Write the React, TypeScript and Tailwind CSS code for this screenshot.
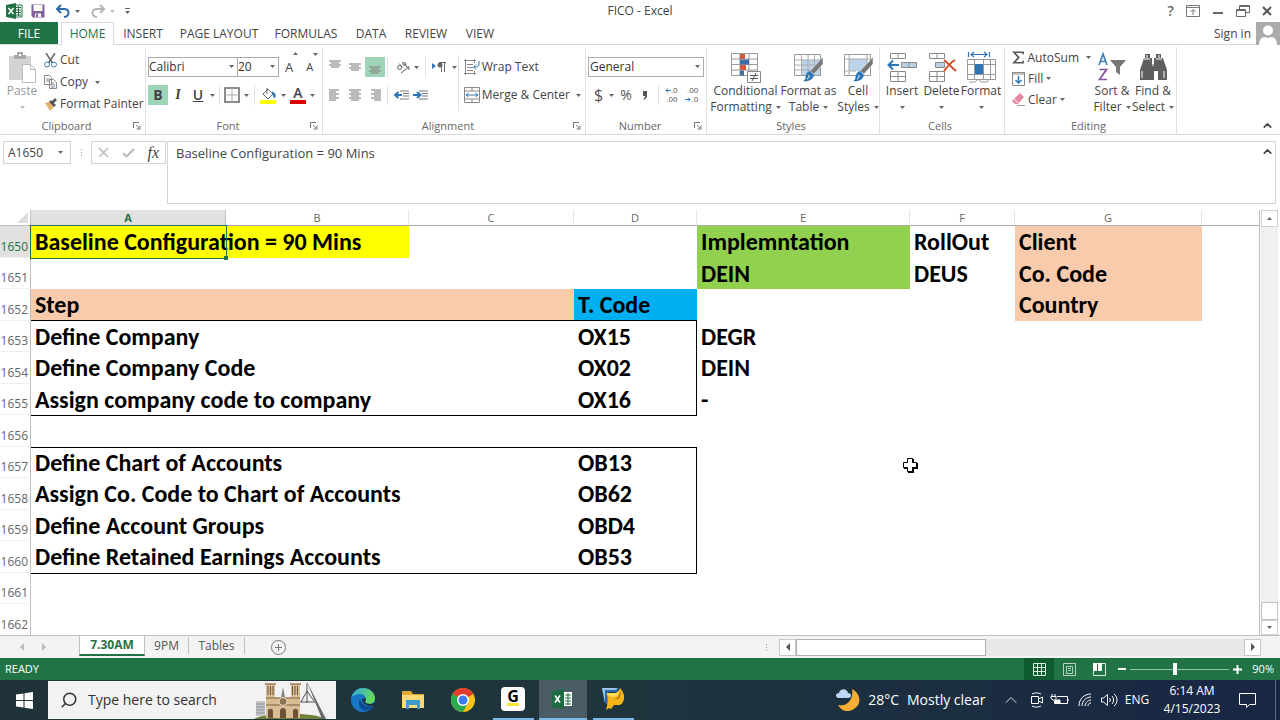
import type { ReactNode } from "react"
import { ChevronUp, Search } from "lucide-react"

type Cell = { text?: string, fill?: string, edge?: string }
type Row = { id: number, cells: Cell[] }

const peach = "bg-[#f8cbad]"
const top = "border-t border-black"
const right = "border-r border-black"
const topRight = "border-t border-r border-black"

const rows: Row[] = [
    { id: 1650, cells: [{ text: "Baseline Configuration = 90 Mins", fill: "bg-[#ffff00]" }, { fill: "bg-[#ffff00]" }, {}, {}, { text: "Implemntation", fill: "bg-[#92d050]" }, { text: "RollOut" }, { text: "Client", fill: peach }] },
    { id: 1651, cells: [{}, {}, {}, {}, { text: "DEIN", fill: "bg-[#92d050]" }, { text: "DEUS" }, { text: "Co. Code", fill: peach }] },
    { id: 1652, cells: [{ text: "Step", fill: peach, edge: "border-b border-black" }, { fill: peach, edge: "border-b border-black" }, { fill: peach, edge: "border-b border-black" }, { text: "T. Code", fill: "bg-[#00b0f0]", edge: "border-b border-black" }, {}, {}, { text: "Country", fill: peach }] },
    { id: 1653, cells: [{ text: "Define Company" }, {}, {}, { text: "OX15", edge: right }, { text: "DEGR" }, {}, {}] },
    { id: 1654, cells: [{ text: "Define Company Code" }, {}, {}, { text: "OX02", edge: right }, { text: "DEIN" }, {}, {}] },
    { id: 1655, cells: [{ text: "Assign company code to company" }, {}, {}, { text: "OX16", edge: right }, { text: "-" }, {}, {}] },
    { id: 1656, cells: [{ edge: top }, { edge: top }, { edge: top }, { edge: top }, {}, {}, {}] },
    { id: 1657, cells: [{ text: "Define Chart of Accounts", edge: top }, { edge: top }, { edge: top }, { text: "OB13", edge: topRight }, {}, {}, {}] },
    { id: 1658, cells: [{ text: "Assign Co. Code to Chart of Accounts" }, {}, {}, { text: "OB62", edge: right }, {}, {}, {}] },
    { id: 1659, cells: [{ text: "Define Account Groups" }, {}, {}, { text: "OBD4", edge: right }, {}, {}, {}] },
    { id: 1660, cells: [{ text: "Define Retained Earnings Accounts" }, {}, {}, { text: "OB53", edge: right }, {}, {}, {}] },
    { id: 1661, cells: [{ edge: top }, { edge: top }, { edge: top }, { edge: top }, {}, {}, {}] },
    { id: 1662, cells: [{}, {}, {}, {}, {}, {}, {}] },
]

const tabs = [
    { name: "INSERT", width: "w-[58px]" },
    { name: "PAGE LAYOUT", width: "w-[94px]" },
    { name: "FORMULAS", width: "w-20" },
    { name: "DATA", width: "w-[50px]" },
    { name: "REVIEW", width: "w-[60px]" },
    { name: "VIEW", width: "w-12" },
]

function Caret({ className = "text-[#666]" }: { className?: string }) {
    return (
        <svg className={`shrink-0 ${className}`} width="5" height="3" viewBox="0 0 5 3" fill="currentColor">
            <path d="M0 0h5L2.5 3z" />
        </svg>
    )
}

function Sep() {
    return <span className="h-5 w-px shrink-0 bg-[#e1e1e1]" />
}

function Launcher() {
    return (
        <svg width="8" height="8" viewBox="0 0 8 8" fill="none" stroke="#777">
            <path d="M.5 6V.5H6M3 3l3.500 3.500M7 3.500V7H3.500" />
        </svg>
    )
}

function Group({ title, width, launcher, children }: { title: string, width: string, launcher?: boolean, children: ReactNode }) {
    return (
        <section className={`flex shrink-0 flex-col border-r border-[#e1e1e1] ${width}`}>
            <div className="flex h-[71px]">{children}</div>
            <div className="flex h-4 items-center pr-1 text-[11px] text-[#666]">
                <span className="grow text-center">{title}</span>
                {launcher && <button aria-label={`${title} settings`}><Launcher /></button>}
            </div>
        </section>
    )
}

function BigButton({ icon, first, second, width }: { icon: ReactNode, first: string, second?: string, width: string }) {
    return (
        <button className={`flex shrink-0 flex-col items-center pt-1 leading-4 ${width}`}>
            <span className="flex h-8 items-center">{icon}</span>
            <span className="whitespace-nowrap">{first}</span>
            <span className="flex h-4 items-center gap-1 whitespace-nowrap">{second}<Caret /></span>
        </button>
    )
}

function Lines({ rows }: { rows: [number, number, number][] }) {
    return (
        <svg width="12" height="12" viewBox="0 0 12 12" stroke="#8c8c8c" strokeWidth="1.200">
            {rows.map(([x1, x2, y]) => <path key={y} d={`M${x1} ${y}H${x2}`} />)}
        </svg>
    )
}

function ExcelIcon() {
    return (
        <svg width="17" height="16" viewBox="0 0 17 16">
            <path d="M9 2h7v12H9z" fill="#fff" stroke="#217346" />
            <path d="M10 4.500h5M10 7h5M10 9.500h5M10 12h5M12.500 3v10" stroke="#217346" />
            <path d="M0 2l10-2v16L0 14z" fill="#217346" />
            <path d="M2.500 5l5 6M7.500 5l-5 6" stroke="#fff" strokeWidth="1.500" />
        </svg>
    )
}

function Brush({ cell }: { cell?: boolean }) {
    return (
        <svg width="31" height="32" viewBox="0 0 31 32" fill="none">
            <path d="M1.500 3.500h26v21h-26z" fill="#fff" stroke="#999" />
            {cell
                ? <><path d="M6 8h18v12H6z" fill="#bcd4ea" /><path d="M1 8h27M6 3v22M24 3v10M1 20h12" stroke="#aaa" /></>
                : <><path d="M9 9h18v15H9z" fill="#bcd4ea" /><path d="M1 9h27M1 14h27M1 19h27M8.500 3v22M15 3v22M21.500 3v22" stroke="#aaa" /></>}
            <path d="M30 6v7l-9 10-4-3z" fill="#777" stroke="#fff" strokeWidth=".5" />
            <path d="M17 20l4 4c-1 5-6 7-11 6 3-1 2-3 3-6 1-3 3-4 4-4z" fill="#2e75b6" />
            <path d="M16 24c0 2 0 3-2 4" stroke="#fff" />
        </svg>
    )
}

function ConditionalIcon() {
    return (
        <svg width="31" height="32" viewBox="0 0 31 32" fill="none">
            <path d="M1.500 2.500h26v22h-26z" fill="#fff" stroke="#999" />
            <path d="M1 8h27M1 13.500h27M1 19h27M10 2v23M19 2v23" stroke="#999" />
            <path d="M10 3h5v5h-5zM10 14h6v5h-6z" fill="#d35b3c" />
            <path d="M10 8.500h9v5h-9zM10 19.500h4v5h-4z" fill="#3c6fa8" />
            <path d="M17.500 20.500h13v11h-13z" fill="#fff" stroke="#888" />
            <path d="M20 24.500h8M20 27.500h8M26 22l-4 8" stroke="#555" />
        </svg>
    )
}

function CellsIcon({ kind }: { kind: "insert" | "delete" }) {
    return (
        <svg width="31" height="32" viewBox="0 0 31 32" fill="#fff" stroke="#8a8a8a">
            <path d="M3.500 2.500h15v5h-15zM11 2.500v5M3.500 20.500h15v10h-15zM11 20.500v10M3.500 25.500h15" />
            {kind === "insert"
                ? <><path d="M14.500 11.500h15v5h-15zM22 11.500v5" fill="#b9cfe3" /><path d="M12 14H2M6 9.500L1.500 14 6 18.500" fill="none" stroke="#2e75b6" strokeWidth="2" /></>
                : <><path d="M9.500 11.500h9v5h-9z" fill="#b9cfe3" /><path d="M18 9c4 3 7 7 12 11M29 9c-5 3-8 7-11 11" fill="none" stroke="#d2492a" strokeWidth="2" /></>}
        </svg>
    )
}

function FormatIcon() {
    return (
        <svg width="31" height="32" viewBox="0 0 31 32" fill="none">
            <path d="M2.500 1v5M23.500 1v5M5 3.500h16M8 1L5 3.500 8 6M18 1l3 2.500L18 6" stroke="#2e75b6" strokeWidth="1.200" />
            <path d="M1.500 8.500h28v20h-28zM1 13.500h28M1 23.500h28M8.500 8v20M17.500 8v20M24.500 8v20M3 31h6l3-3 3 3h6l2-3" stroke="#999" />
            <path d="M9 13h8v10H9z" fill="#2e75b6" />
        </svg>
    )
}

function SortIcon() {
    return (
        <svg width="30" height="30" viewBox="0 0 30 30" fill="none">
            <path d="M2 13L6 2l4 11M3.500 9.500h5" stroke="#3f7fb5" strokeWidth="1.700" />
            <path d="M2.500 17.500h7l-7 10h7.500" stroke="#8654a0" strokeWidth="1.700" />
            <path d="M13 8h16l-6 7v8l-4-3v-5z" fill="#777" />
        </svg>
    )
}

function FindIcon() {
    return (
        <svg width="30" height="30" viewBox="0 0 30 30">
            <path d="M7 2h5v4h2v6h2V6h2V2h5v4h2l4 12v10h-9V19h-4v9H2V18L6 6h1z" fill="#5f5f5f" />
            <path d="M9 3v3M21 3v3M6 7h6M18 7h6M4 19v7M26 19v7M14 13h2" stroke="#fff" />
        </svg>
    )
}

function TitleBar() {
    return (
        <header className="grid h-[22px] shrink-0 grid-cols-3 items-center text-xs text-[#444]">
            <div className="flex items-center pl-1.5">
                <ExcelIcon />
                <button aria-label="Save" className="ml-2">
                    <svg width="14" height="14" viewBox="0 0 14 14">
                        <path d="M.5.500h13v13H2L.5 12z" fill="#80609c" />
                        <path d="M2.500 1h9v6h-9zM4 9.500h6V13H4z" fill="#fff" />
                        <path d="M5 10h2v3H5z" fill="#80609c" />
                    </svg>
                </button>
                <button aria-label="Undo" className="ml-2.5 flex items-center gap-1">
                    <svg width="16" height="14" viewBox="0 0 16 14" fill="none" stroke="#2b6ca8" strokeWidth="2">
                        <path d="M6 1L2 5l4 4M2 5h7c6 0 6 7 0 8" />
                    </svg>
                    <Caret />
                </button>
                <button aria-label="Redo" className="ml-2.5 flex items-center gap-1">
                    <svg width="16" height="14" viewBox="0 0 16 14" fill="none" stroke="#b5b5b5" strokeWidth="2">
                        <path d="M10 1l4 4-4 4M14 5H7c-6 0-6 7 0 8" />
                    </svg>
                    <Caret className="text-[#bbb]" />
                </button>
                <button aria-label="Customize toolbar" className="ml-2.5 flex flex-col gap-0.5">
                    <span className="h-px w-[5px] bg-[#666]" />
                    <Caret />
                </button>
            </div>
            <h1 className="text-center">FICO - Excel</h1>
            <div className="flex items-center justify-end gap-3 pr-2">
                <button className="text-sm leading-4 font-semibold text-[#666]">?</button>
                <button aria-label="Ribbon display options">
                    <svg width="14" height="12" viewBox="0 0 14 12" fill="none" stroke="#777">
                        <path d="M.5.500h13v11H.5zM0 2.500h14M7 10V5M4.500 7L7 4.500 9.500 7" />
                    </svg>
                </button>
                <button aria-label="Minimize">
                    <svg width="12" height="12" viewBox="0 0 12 12"><path d="M1 8h10" stroke="#666" strokeWidth="2" /></svg>
                </button>
                <button aria-label="Restore">
                    <svg width="14" height="12" viewBox="0 0 14 12" fill="none" stroke="#666">
                        <path d="M.5 4.500h9v7h-9zM.5 5.500h9M3.500 4V.500h10v7H10M3.500 1.500h10" />
                    </svg>
                </button>
                <button aria-label="Close">
                    <svg width="10" height="10" viewBox="0 0 10 10"><path d="M1 1l8 8M9 1L1 9" stroke="#555" strokeWidth="2" /></svg>
                </button>
            </div>
        </header>
    )
}

function TabBar() {
    return (
        <nav className="flex h-[23px] shrink-0 border-b border-[#d9d9d9] text-xs text-[#444]">
            <button className="w-[58px] bg-[#217346] pt-px text-white">FILE</button>
            <button className="-mb-px ml-[3px] w-[53px] border border-b-0 border-[#d9d9d9] bg-white text-[#217346]">HOME</button>
            {tabs.map(tab => <button key={tab.name} className={`pt-0.5 whitespace-nowrap ${tab.width}`}>{tab.name}</button>)}
            <a href="#signin" className="mr-[5px] ml-auto self-center pt-0.5">Sign in</a>
            <svg className="h-[23px] w-6" viewBox="0 0 24 23">
                <path d="M0 0h24v23H0z" fill="#ababab" />
                <circle cx="12" cy="8.500" r="5" fill="#fff" />
                <path d="M3 23c0-6 3-8 6-8l3 1 3-1c3 0 6 2 6 8z" fill="#fff" />
            </svg>
        </nav>
    )
}

function FontGroup() {
    return (
        <Group title="Font" width="w-[177px]" launcher>
            <div className="flex flex-col gap-2 pt-2.5 pl-0.5">
                <div className="flex h-5 items-center">
                    <div className="relative">
                        <select aria-label="Font" className="h-5 w-[90px] appearance-none border border-[#ababab] bg-white text-xs text-[#333] outline-none">
                            <option>Calibri</option>
                        </select>
                        <span className="pointer-events-none absolute top-2 right-1"><Caret /></span>
                    </div>
                    <div className="relative">
                        <select aria-label="Font size" className="h-5 w-[41px] appearance-none border border-l-0 border-[#ababab] bg-white text-xs text-[#333] outline-none">
                            <option>20</option>
                        </select>
                        <span className="pointer-events-none absolute top-2 right-1"><Caret /></span>
                    </div>
                    <button className="ml-1.5 flex text-[13px] leading-5">A<sup><Caret className="rotate-180 text-[#666]" /></sup></button>
                    <button className="ml-2 flex text-[11px] leading-5">A<sup><Caret /></sup></button>
                </div>
                <div className="flex h-5 items-center text-sm">
                    <button className="h-5 w-5 bg-[#9fd5b7] leading-5 font-bold">B</button>
                    <button className="w-5 font-serif font-bold italic">I</button>
                    <button className="w-5 font-semibold underline">U</button>
                    <button aria-label="Underline style" className="ml-0.5"><Caret /></button>
                    <span className="mx-1 flex"><Sep /></span>
                    <button aria-label="Borders" className="flex items-center gap-1">
                        <svg width="16" height="16" viewBox="0 0 16 16" fill="none">
                            <path d="M1 1h14v14H1z" stroke="#666" strokeWidth="1.500" />
                            <path d="M8 1v14M1 8h14" stroke="#aaa" />
                        </svg>
                        <Caret />
                    </button>
                    <span className="mx-[5px] flex"><Sep /></span>
                    <button aria-label="Fill color" className="flex items-center gap-1">
                        <svg width="17" height="17" viewBox="0 0 17 17" fill="none">
                            <path d="M3 7l5-5 5 5-5 5z" fill="#fff" stroke="#666" />
                            <path d="M7 7V1" stroke="#666" />
                            <path d="M12 5c3 1 4 3 2.500 6-1-2-1-3-2.500-6z" fill="#2e75b6" stroke="#2e75b6" />
                            <path d="M0 13h16v4H0z" fill="#ffff00" />
                        </svg>
                        <Caret />
                    </button>
                    <button aria-label="Font color" className="ml-1 flex items-center gap-1">
                        <span className="flex w-4 flex-col items-center text-sm leading-3 font-semibold">A<span className="mt-px h-1 w-4 bg-[#d80000]" /></span>
                        <Caret />
                    </button>
                </div>
            </div>
        </Group>
    )
}

function AlignmentGroup() {
    return (
        <Group title="Alignment" width="w-[263px]" launcher>
            <div className="flex flex-col gap-2 pt-2.5 pl-0.5">
                <div className="flex h-5 items-center">
                    <button aria-label="Top align" className="flex h-5 w-5 items-center justify-center pb-1"><Lines rows={[[0, 12, 2], [2, 10, 4], [0, 12, 6], [2, 10, 8]]} /></button>
                    <button aria-label="Middle align" className="flex h-5 w-5 items-center justify-center"><Lines rows={[[0, 12, 3], [2, 10, 5], [0, 12, 7], [2, 10, 9]]} /></button>
                    <button aria-label="Bottom align" className="flex h-5 w-5 items-center justify-center bg-[#9fd5b7] pt-1"><Lines rows={[[0, 12, 4], [2, 10, 6], [0, 12, 8], [2, 10, 10]]} /></button>
                    <span className="mr-2 ml-0.5 flex"><Sep /></span>
                    <button aria-label="Orientation" className="flex items-center gap-1">
                        <svg width="14" height="14" viewBox="0 0 14 14" fill="none" stroke="#666">
                            <circle cx="3.500" cy="7.500" r="2" /><path d="M3 3.500l4 4M6 2l5 4.500" /><circle cx="8.500" cy="4" r="1.500" /><path d="M5 13l8-6M13 10V7h-3" />
                        </svg>
                        <Caret />
                    </button>
                    <span className="mx-1.5 flex"><Sep /></span>
                    <button aria-label="Text direction" className="flex items-center gap-1.5">
                        <svg width="14" height="10" viewBox="0 0 14 10">
                            <path d="M0 1l4 3-4 3z" fill="#2e75b6" />
                            <path d="M9.500 0v10M12.500 0v10M7 .500h7" stroke="#666" />
                            <circle cx="8" cy="3" r="2.500" fill="#666" />
                        </svg>
                        <Caret />
                    </button>
                </div>
                <div className="flex h-5 items-center">
                    <button aria-label="Align left" className="flex w-5 justify-center"><Lines rows={[[0, 10, 1], [0, 7, 3], [0, 10, 5], [0, 7, 7], [0, 10, 9], [0, 7, 11]]} /></button>
                    <button aria-label="Center" className="flex w-5 justify-center"><Lines rows={[[0, 12, 1], [2, 10, 3], [0, 12, 5], [2, 10, 7], [0, 12, 9], [2, 10, 11]]} /></button>
                    <button aria-label="Align right" className="flex w-5 justify-center"><Lines rows={[[2, 12, 1], [5, 12, 3], [2, 12, 5], [5, 12, 7], [2, 12, 9], [5, 12, 11]]} /></button>
                    <span className="mr-1.5 ml-0.5 flex"><Sep /></span>
                    <button aria-label="Decrease indent">
                        <svg width="15" height="10" viewBox="0 0 15 10" fill="none"><path d="M6 1h9M9 3.500h6M9 6h6M6 9h9" stroke="#777" /><path d="M8 5H2M4.500 2L1 5l3.500 3" stroke="#2e75b6" strokeWidth="2" /></svg>
                    </button>
                    <button aria-label="Increase indent" className="ml-1">
                        <svg width="15" height="10" viewBox="0 0 15 10" fill="none"><path d="M6 1h9M9 3.500h6M9 6h6M6 9h9" stroke="#777" /><path d="M0 5h6M4 2l3.500 3L4 8" stroke="#2e75b6" strokeWidth="2" /></svg>
                    </button>
                </div>
            </div>
            <span className="mt-2 ml-auto h-14 w-px bg-[#e1e1e1]" />
            <div className="flex flex-col gap-2 pt-2.5 pr-1 pl-[5px]">
                <button className="flex h-5 items-center gap-0.5">
                    <svg width="16" height="16" viewBox="0 0 16 16" fill="none" stroke="#888">
                        <path d="M1.500 0v16M10.500 0v4M10.500 12v4M0 1.500h12M3 5.500h6M3 8.500h6M3 11.500h6M0 14.500h12" />
                        <path d="M15 2v3c0 3-2 3-5 3M12 5.500L9.500 8l2.500 2.500" stroke="#2e75b6" />
                    </svg>
                    Wrap Text
                </button>
                <button className="flex h-5 items-center gap-0.5 whitespace-nowrap">
                    <svg width="16" height="16" viewBox="0 0 16 16" fill="none" stroke="#888">
                        <path d="M.5.500h15v15H.500zM0 4h16M0 12h16M8 0v4M8 12v4" />
                        <path d="M2 8h12M4.500 6L2 8l2.500 2M11.500 6L14 8l-2.500 2" stroke="#2e75b6" />
                    </svg>
                    Merge &amp; Center
                    <span className="ml-1"><Caret /></span>
                </button>
            </div>
        </Group>
    )
}

function NumberGroup() {
    return (
        <Group title="Number" width="w-[121px]" launcher>
            <div className="flex flex-col gap-2 pt-2.5 pl-0.5">
                <div className="relative">
                    <select aria-label="Number format" className="h-5 w-[116px] appearance-none border border-[#ababab] bg-white pl-px text-xs text-[#333] outline-none">
                        <option>General</option>
                    </select>
                    <span className="pointer-events-none absolute top-2 right-1"><Caret /></span>
                </div>
                <div className="flex h-5 items-center text-base text-[#555]">
                    <button className="flex items-center gap-1.5 pl-1.5">$<Caret /></button>
                    <button className="ml-1.5 text-sm">%</button>
                    <button aria-label="Comma style" className="ml-2.5">
                        <svg width="6" height="9" viewBox="0 0 6 9" fill="#555"><path d="M1 0h4v4c0 3-1 4-4 5 1-2 2-2 2-4H1z" /></svg>
                    </button>
                    <span className="mr-1.5 ml-2.5 flex"><Sep /></span>
                    <button aria-label="Increase decimal" className="flex flex-col items-end font-['Liberation_Sans',sans-serif] text-[8px] leading-[9px]">
                        <span className="flex items-center">
                            <svg width="6" height="5" viewBox="0 0 6 5" fill="none" stroke="#2e75b6"><path d="M6 2.500H1M3 .5l-2 2 2 2" /></svg>
                            .0
                        </span>
                        <span>.00</span>
                    </button>
                    <button aria-label="Decrease decimal" className="ml-2 flex flex-col items-end font-['Liberation_Sans',sans-serif] text-[8px] leading-[9px]">
                        <span>.00</span>
                        <span className="flex items-center">
                            <svg width="6" height="5" viewBox="0 0 6 5" fill="none" stroke="#2e75b6"><path d="M0 2.500h5M3 .5l2 2-2 2" /></svg>
                            .0
                        </span>
                    </button>
                </div>
            </div>
        </Group>
    )
}

function Ribbon() {
    return (
        <div className="flex h-[90px] shrink-0 overflow-hidden border-b border-[#d9d9d9] pt-0.5 text-xs text-[#444]">
            <Group title="Clipboard" width="w-[146px]" launcher>
                <button className="flex w-11 flex-col items-center pt-1 leading-4 text-[#999]">
                    <span className="flex h-8 items-center">
                        <svg width="28" height="31" viewBox="0 0 28 31">
                            <path d="M1 4h22v24H1z" fill="#d3d3d3" />
                            <path d="M6 7V3h3V0h6v3h3v4z" fill="#a8a8a8" /><path d="M11 2h2v2h-2z" fill="#fff" />
                            <path d="M14.500 12.500h8l5 5v13h-13z" fill="#fff" stroke="#bbb" /><path d="M22.500 12.500v5h5" fill="none" stroke="#bbb" />
                        </svg>
                    </span>
                    <span>Paste</span>
                    <span className="flex h-4 items-center"><Caret className="text-[#bbb]" /></span>
                </button>
                <div className="flex flex-col pt-0.5">
                    <button className="flex h-[22px] items-center gap-[3px]">
                        <svg width="13" height="15" viewBox="0 0 13 15" fill="none">
                            <path d="M2 0l6.500 10M11 0L4.500 10" stroke="#666" strokeWidth="1.500" />
                            <circle cx="3" cy="11.500" r="2.500" stroke="#3f7fb5" /><circle cx="10" cy="11.500" r="2.500" stroke="#3f7fb5" />
                        </svg>
                        Cut
                    </button>
                    <button className="flex h-[22px] items-center gap-[3px]">
                        <svg width="13" height="14" viewBox="0 0 13 14" fill="#fff" stroke="#888">
                            <path d="M.5.500h5l2 2v7h-7zM2 4h4M2 6h4M5.500 4.500h4l3 3v6h-7zM7 8h3M7 10h4M7 12h4" />
                        </svg>
                        Copy
                        <span className="ml-1"><Caret /></span>
                    </button>
                    <button className="flex h-[22px] items-center gap-[3px] whitespace-nowrap">
                        <svg width="13" height="13" viewBox="0 0 13 13">
                            <path d="M1 5l4-1 5 5-4 4z" fill="#e5b26c" /><path d="M5 4l2-2 5 5-2 2zM8 3l3-3 2 2-3 3z" fill="#555" />
                        </svg>
                        Format Painter
                    </button>
                </div>
            </Group>
            <FontGroup />
            <AlignmentGroup />
            <NumberGroup />
            <Group title="Styles" width="w-[173px]">
                <div className="flex pl-[5px]">
                    <BigButton icon={<ConditionalIcon />} first="Conditional" second="Formatting" width="w-[67px]" />
                    <BigButton icon={<Brush />} first="Format as" second="Table" width="w-[59px]" />
                    <BigButton icon={<Brush cell />} first="Cell" second="Styles" width="w-10" />
                </div>
            </Group>
            <Group title="Cells" width="w-[125px]">
                <div className="flex pl-0.5">
                    <BigButton icon={<CellsIcon kind="insert" />} first="Insert" width="w-10" />
                    <BigButton icon={<CellsIcon kind="delete" />} first="Delete" width="w-[39px]" />
                    <BigButton icon={<FormatIcon />} first="Format" width="w-10" />
                </div>
            </Group>
            <Group title="Editing" width="w-[172px]">
                <div className="flex w-[86px] flex-col pl-[7px]">
                    <button className="flex h-[21px] items-center gap-[3px]">
                        <svg width="13" height="13" viewBox="0 0 13 13" fill="none"><path d="M11.500 3V1H2l5 5.500L2 12h9.500v-2" stroke="#555" strokeWidth="1.700" /></svg>
                        AutoSum
                        <span className="ml-1"><Caret /></span>
                    </button>
                    <button className="flex h-[21px] items-center gap-[3px]">
                        <svg width="13" height="14" viewBox="0 0 13 14" fill="none"><path d="M.5.500h12v13H.500zM0 2h13" stroke="#888" /><path d="M6.500 4v7M3.500 8l3 3 3-3" stroke="#2e75b6" strokeWidth="1.500" /></svg>
                        Fill
                        <Caret />
                    </button>
                    <button className="flex h-[21px] items-center gap-[3px]">
                        <svg width="13" height="13" viewBox="0 0 13 13"><path d="M0 8l8-8 4 4-6 7H3z" fill="#e58a9f" /><path d="M2 6l4 4" stroke="#fff" /><path d="M5 12.500h8" stroke="#999" /></svg>
                        Clear
                        <Caret />
                    </button>
                </div>
                <BigButton icon={<SortIcon />} first="Sort &" second="Filter" width="w-[42px]" />
                <BigButton icon={<FindIcon />} first="Find &" second="Select" width="w-10" />
            </Group>
            <button aria-label="Collapse ribbon" className="mr-1.5 mb-0.5 ml-auto self-end"><ChevronUp size={13} strokeWidth={3} /></button>
        </div>
    )
}

function FormulaBar() {
    return (
        <div className="flex shrink-0 items-start py-[6px] pr-1 pl-[3px] text-xs text-[#444]">
            <div className="relative">
                <input aria-label="Name box" defaultValue="A1650" className="h-[23px] w-[68px] border border-[#d4d4d4] pl-1 outline-none" />
                <span className="pointer-events-none absolute top-2.5 right-2"><Caret /></span>
            </div>
            <div className="flex h-[23px] w-5 flex-col items-center justify-center gap-0.5">
                <span className="size-px bg-[#999]" /><span className="size-px bg-[#999]" /><span className="size-px bg-[#999]" />
            </div>
            <div className="flex h-[23px] w-[75px] items-center justify-between border border-[#d4d4d4] px-1.5">
                <button aria-label="Cancel"><svg width="11" height="11" viewBox="0 0 11 11"><path d="M1 1l9 9M10 1l-9 9" stroke="#bbb" strokeWidth="1.500" /></svg></button>
                <button aria-label="Enter"><svg width="13" height="10" viewBox="0 0 13 10" fill="none"><path d="M1 5l3.500 3.500L12 1" stroke="#bbb" strokeWidth="2" /></svg></button>
                <button className="font-['Liberation_Serif',serif] text-base italic">fx</button>
            </div>
            <div className="relative ml-px h-[63px] grow">
                <textarea aria-label="Formula" defaultValue="Baseline Configuration = 90 Mins" className="block h-full w-full resize-none border border-[#d4d4d4] px-2 pt-0.5 text-[13px] leading-[18px] outline-none" />
                <ChevronUp size={13} strokeWidth={3} className="absolute top-1 right-0.5" />
            </div>
        </div>
    )
}

function Sheet() {
    return (
        <main className="flex min-h-0 grow border-b border-[#bfbfbf]">
            <div className="relative min-w-0 grow overflow-hidden border-r border-[#bfbfbf]">
                <table className="w-full table-fixed border-separate border-spacing-0">
                    <colgroup>
                        <col className="w-[31px]" />
                        <col className="w-[195px]" />
                        <col className="w-[183px]" />
                        <col className="w-[165px]" />
                        <col className="w-[123px]" />
                        <col className="w-[213px]" />
                        <col className="w-[105px]" />
                        <col className="w-[187px]" />
                        <col />
                    </colgroup>
                    <thead>
                        <tr className="h-4 text-[11px] leading-[15px] text-[#666]">
                            <th aria-label="Select all" className="border-r border-b border-[#bfbfbf] p-0">
                                <svg className="mr-0.5 ml-auto" width="11" height="11" viewBox="0 0 11 11"><path d="M11 0v11H0z" fill="#ddd" /></svg>
                            </th>
                            <th className="border-r border-b border-r-[#bfbfbf] border-b-[#217346] bg-[#e1e1e1] p-0 font-bold text-[#217346]">A</th>
                            {["B", "C", "D", "E", "F", "G"].map(name => (
                                <th key={name} className="border-r border-b border-r-[#e5e5e5] border-b-[#ababab] p-0 font-normal">{name}</th>
                            ))}
                            <th className="border-b border-[#ababab] p-0" />
                        </tr>
                    </thead>
                    <tbody>
                        {rows.map((row, i) => (
                            <tr key={row.id} className={i % 2 ? "h-[31px]" : "h-8"}>
                                <th className={`border-r border-b border-r-[#bfbfbf] border-b-[#eee] p-0 pr-0.5 text-right align-bottom text-xs leading-5 font-normal ${i === 0 ? "bg-[#e1e1e1] text-[#217346]" : "text-[#666]"}`}>{row.id}</th>
                                {row.cells.map((cell, n) => {
                                    const selected = i === 0 && n === 0
                                    return (
                                        <td key={n} className={`p-0 pl-1 font-[Carlito,Lato,sans-serif] text-2xl leading-7 font-bold whitespace-nowrap text-black ${selected ? "relative" : ""} ${cell.fill ?? ""} ${cell.edge ?? ""}`}>
                                            {cell.text}
                                            {selected && (
                                                <span className="absolute -inset-px border border-[#217346]">
                                                    <span className="absolute -right-0.5 -bottom-0.5 size-1 bg-[#217346]" />
                                                </span>
                                            )}
                                        </td>
                                    )
                                })}
                                <td />
                            </tr>
                        ))}
                    </tbody>
                </table>
                <svg className="absolute top-[247px] left-[902px]" width="16" height="16" viewBox="0 0 16 16">
                    <path d="M6 2h6v4h4v6h-4v4H6v-4H2V6h4z" fill="#000" />
                    <path d="M5.500 1.500h5v4h4v5h-4v4h-5v-4h-4v-5h4z" fill="#fff" stroke="#000" />
                </svg>
            </div>
            <div className="flex w-5 shrink-0 flex-col pr-0.5 pl-px">
                <button aria-label="Scroll up" className="flex h-[17px] shrink-0 items-center justify-center border border-[#d0d0d0]"><Caret className="rotate-180 text-[#666]" /></button>
                <div className="grow bg-[#f0f0f0]" />
                <div className="h-[18px] shrink-0 border border-[#c0c0c0] bg-white" />
                <button aria-label="Scroll down" className="flex h-[15px] shrink-0 items-center justify-center border border-[#d0d0d0]"><Caret /></button>
            </div>
        </main>
    )
}

function Arrow({ flip, color }: { flip?: boolean, color: string }) {
    return (
        <svg width="4" height="8" viewBox="0 0 4 8" fill={color}>
            <path d={flip ? "M0 0l4 4-4 4z" : "M4 0v8L0 4z"} />
        </svg>
    )
}

function SheetTabs() {
    return (
        <div className="flex h-[22px] shrink-0 bg-[#f3f3f3] text-xs text-[#555]">
            <div className="flex w-[79px] items-center gap-[18px] pl-5">
                <button aria-label="Previous sheet"><Arrow color="#bbb" /></button>
                <button aria-label="Next sheet"><Arrow flip color="#bbb" /></button>
            </div>
            <button className="mb-0.5 w-[66px] border-x border-b-2 border-x-[#bfbfbf] border-b-[#217346] bg-white font-bold text-[#217346]">7.30AM</button>
            <button className="mt-px mb-1 w-11 border-r border-[#bfbfbf]">9PM</button>
            <button className="mt-px mb-1 w-14 border-r border-[#bfbfbf]">Tables</button>
            <button aria-label="New sheet" className="ml-[26px]">
                <svg width="15" height="15" viewBox="0 0 15 15" fill="none" stroke="#777"><circle cx="7.500" cy="7.500" r="7" /><path d="M7.500 4v7M4 7.500h7" /></svg>
            </button>
            <div className="ml-auto flex w-[514px] items-center">
                <div className="mr-3 flex flex-col gap-0.5"><span className="size-px bg-[#999]" /><span className="size-px bg-[#999]" /><span className="size-px bg-[#999]" /></div>
                <button aria-label="Scroll left" className="flex h-[17px] w-[17px] items-center justify-center border border-[#c6c6c6] bg-white"><Arrow color="#555" /></button>
                <div className="h-[17px] w-[190px] border border-[#b0b0b0] bg-white" />
                <div className="h-[17px] grow bg-[#e8e8e8]" />
                <button aria-label="Scroll right" className="mr-[19px] flex h-[17px] w-[17px] items-center justify-center border border-[#c6c6c6] bg-white"><Arrow flip color="#555" /></button>
            </div>
        </div>
    )
}

function StatusBar() {
    return (
        <footer className="flex h-[22px] shrink-0 items-center bg-[#217346] pr-1.5 pl-[5px] text-[11px] text-white">
            <span>READY</span>
            <button aria-label="Normal view" className="ml-auto flex h-full w-[30px] items-center justify-center bg-[#0e5c2f]">
                <svg width="13" height="13" viewBox="0 0 13 13" fill="none" stroke="#d8ebdf"><path d="M.5.500h12v12H.500zM4.500 0v13M8.500 0v13M0 4.500h13M0 8.500h13" /></svg>
            </button>
            <button aria-label="Page layout view" className="flex w-[30px] justify-center">
                <svg width="13" height="13" viewBox="0 0 13 13" fill="none" stroke="#b5d5c1"><path d="M.5.500h12v12H.500zM3.500 3.500h6v7h-6zM5 5.500h3M5 7.500h3" /></svg>
            </button>
            <button aria-label="Page break view" className="flex w-[30px] justify-center">
                <svg width="13" height="13" viewBox="0 0 13 13" fill="none"><path d="M.5.500h12v12H.500z" stroke="#d8ebdf" /><path d="M0 0h4v8H0zM5 0h4v8H5z" fill="#fff" /></svg>
            </button>
            <button aria-label="Zoom out" className="ml-1 h-0.5 w-2 bg-white" />
            <input
                aria-label="Zoom"
                type="range"
                min="10"
                max="190"
                defaultValue="90"
                className="mx-1 h-px w-[99px] appearance-none bg-[#9cc5ac] [&::-webkit-slider-thumb]:h-3 [&::-webkit-slider-thumb]:w-1 [&::-webkit-slider-thumb]:appearance-none [&::-webkit-slider-thumb]:bg-white"
            />
            <button aria-label="Zoom in"><svg width="9" height="9" viewBox="0 0 9 9"><path d="M4.500 0v9M0 4.500h9" stroke="#fff" strokeWidth="2" /></svg></button>
            <span className="ml-2.5">90%</span>
        </footer>
    )
}

function Cathedral() {
    return (
        <svg className="h-[38px] w-[74px]" viewBox="0 0 74 38">
            <path d="M0 38c10-7 60-7 72 0z" fill="#71803c" />
            <path d="M2 20h9v15H2z" fill="#c3c6c9" /><path d="M2 23h9M2 26h9M2 29h9M2 32h9" stroke="#8b9095" />
            <path d="M12 3h9v14h16V3h9v34H12z" fill="#d9bd94" />
            <path d="M11 3h11M36 3h11M12 17h34M12 24h34" stroke="#9c7e57" strokeWidth="1.500" />
            <path d="M14 5v9M16.500 5v9M19 5v9M38.500 5v9M41 5v9M43.500 5v9" stroke="#67543e" />
            <path d="M29 6l2 10h-4z" fill="#888" />
            <circle cx="29" cy="20.500" r="4" fill="#8a7256" stroke="#f0ddba" />
            <path d="M14 37v-7c0-3 5-3 5 0v7zM26 37v-7c0-4 6-4 6 0v7zM39 37v-7c0-3 5-3 5 0v7z" fill="#6d5237" />
            <path d="M53 2v20M46 21h16M53 10l-6 11M53 10l7 10" stroke="#555" strokeWidth="1" fill="none" />
            <path d="M53 1l19 37h-4z" fill="#666" />
        </svg>
    )
}

function TaskButton({ name, open, active, children }: { name: string, open?: boolean, active?: boolean, children: ReactNode }) {
    return (
        <button aria-label={name} className="flex h-10 w-[50px] flex-col items-center px-px">
            <span className={`flex w-full grow items-center justify-center ${active ? "bg-[#4a5d66]" : ""}`}>{children}</span>
            {open && <span className={active ? "h-0.5 w-full bg-[#7cb8e8]" : "h-0.5 w-[41px] bg-[#7cb8e8]"} />}
        </button>
    )
}

function Taskbar() {
    return (
        <div className="flex h-10 shrink-0 items-center bg-linear-to-r from-[#1f3339] via-[#1f343d] to-[#182644] text-sm text-white">
            <button aria-label="Start" className="flex w-12 justify-center">
                <svg width="17" height="17" viewBox="0 0 17 17" fill="#fff"><path d="M0 2.500L7.500 1.500V8H0zM8.500 1.300L17 0v8H8.500zM0 9h7.500v6.500L0 14.500zM8.500 9H17v8l-8.500-1.300z" /></svg>
            </button>
            <label className="flex h-[38px] w-72 items-center bg-[#f2f2f2] pl-3 text-[#333]">
                <Search size={18} strokeWidth={2} className="-scale-x-100" />
                <input placeholder="Type here to search" className="w-44 bg-transparent pl-2.5 outline-none placeholder:text-[#333]" />
                <Cathedral />
            </label>
            <div className="flex pl-0.5">
                <TaskButton name="Edge">
                    <svg width="24" height="24" viewBox="0 0 24 24">
                        <defs>
                            <linearGradient id="edgeTop" x1="0" y1="0" x2="1" y2=".4"><stop offset="0" stopColor="#2fa6e8" /><stop offset="1" stopColor="#65d95a" /></linearGradient>
                        </defs>
                        <circle cx="12" cy="12" r="12" fill="#1976c5" />
                        <path d="M.3 10C2 3 7 0 12 0c7 0 12 5 12 10 0 5-5 7-9 5-2-1 0-2 0-4 0-3-3-5-6-5-4 0-7 1-8.700 4z" fill="url(#edgeTop)" />
                        <path d="M9 11c-3 5 0 10 5 12 4-1 7-3 8-5-5 2-11 0-13-7z" fill="#0d4a8f" />
                        <path d="M11 11c0-1 4-1 4 0 0 2-2 3 0 4 3 2 7 1 9-1 0 2-1 4-2 4-5 1-11-2-11-7z" fill="#1f343d" />
                    </svg>
                </TaskButton>
                <TaskButton name="File Explorer">
                    <svg width="22" height="18" viewBox="0 0 22 18">
                        <path d="M0 0h9l2 3h11v14H0z" fill="#e3a72f" /><path d="M0 4h22v13H0z" fill="#ffd972" />
                        <path d="M4 9h14v9h-3v-4H7v4H4z" fill="#3c9bd1" />
                    </svg>
                </TaskButton>
                <TaskButton name="Chrome">
                    <svg width="24" height="24" viewBox="0 0 24 24">
                        <circle cx="12" cy="12" r="12" fill="#fbc116" />
                        <path d="M12 12L1.600 6A12 12 0 0 1 22.400 6z" fill="#e33b2e" />
                        <path d="M12 12L1.600 6A12 12 0 0 0 12 24l5-9z" fill="#2da94f" />
                        <circle cx="12" cy="12" r="6" fill="#fff" /><circle cx="12" cy="12" r="4.500" fill="#3b7ded" />
                    </svg>
                </TaskButton>
                <TaskButton name="Notes" open>
                    <span className="flex size-6 flex-col items-center rounded bg-white text-base leading-[18px] font-bold text-black">G<span className="-mt-0.5 h-[3px] w-3 bg-[#f6e532]" /></span>
                </TaskButton>
                <TaskButton name="Excel" open active>
                    <svg width="22" height="20" viewBox="0 0 22 20">
                        <path d="M12 3h8v14h-8z" fill="#fff" /><path d="M13 6h6M13 9h6M13 12h6M13 15h6M16 4v12" stroke="#217346" />
                        <path d="M0 2l12-2v20L0 18z" fill="#1d6b41" /><path d="M3 6.500l5 7M8 6.500l-5 7" stroke="#fff" strokeWidth="1.700" />
                    </svg>
                </TaskButton>
                <TaskButton name="SAP Logon" open>
                    <svg width="24" height="24" viewBox="0 0 24 24">
                        <path d="M1 1h16v4H7v13l-4-3z" fill="#2f69ad" /><path d="M1 1h16l-3 2H4v12z" fill="#9cc4ea" />
                        <path d="M6 6h8c2 0 4-2 5-5 6 6 5 14 0 17h-6l-3 4-2-1-3 2c2-6 2-11 1-17z" fill="#f7b51b" />
                        <path d="M6 6h8c2 0 3-1 4-2 0 3-2 6-5 6-3 0-5-1-7-2z" fill="#ffdc54" />
                        <path d="M19 3c0 6-2 8-5 9 4 1 7-3 5-9z" fill="#b36b0c" />
                    </svg>
                </TaskButton>
            </div>
            <div className="ml-auto flex items-center">
                <svg width="24" height="24" viewBox="0 0 24 24">
                    <path d="M16 1c9 5 10 15 2 20-6 4-13 2-16-4 9 2 16-6 14-16z" fill="#f6ae33" />
                    <path d="M3 10c-4 0-4-5 0-5 1-5 8-5 9 0 4 0 4 5 0 5z" fill="#bcd7f5" />
                </svg>
                <span className="pl-2">28°C</span>
                <span className="w-[102px] pl-2 whitespace-nowrap">Mostly clear</span>
                <button aria-label="Show hidden icons" className="w-6"><ChevronUp size={20} strokeWidth={1} /></button>
                <svg className="w-6" height="16" viewBox="0 0 24 16" fill="none" stroke="#fff"><path d="M6.500 4.500h7v7h-7zM13.500 7l4-2v6l-4-2M7 2c3-1.500 6-1.500 9 0M7 14c3 1.500 6 1.500 9 0" /></svg>
                <svg className="w-6" height="16" viewBox="0 0 24 16" fill="none" stroke="#fff"><path d="M8 4.500h10.500v7H5.500V9M19 7v2M3 2v2M6 2v2M2 4.500h5v2l-2 2-3-2z" /><path d="M6 8h5v3H6z" fill="#fff" /></svg>
                <svg className="w-6" height="16" viewBox="0 0 24 16" fill="none" stroke="#fff"><path d="M6 14C6 7 11 2 18 2M9 14c0-5 4-9 9-9M12 14c0-3 3-6 6-6M15 14c0-2 1-3 3-3" /></svg>
                <svg className="w-6" height="16" viewBox="0 0 24 16" fill="none" stroke="#fff"><path d="M4.500 6h2l4-3.500v11l-4-3.500h-2zM12.500 6c1 1 1 3 0 4M15 4c2 2 2 6 0 8M17 2c4 3 4 9 0 12" /></svg>
                <span className="w-8 text-center text-xs">ENG</span>
                <div className="w-[78px] text-center text-xs leading-[18px]">
                    <p>6:14 AM</p>
                    <p>4/15/2023</p>
                </div>
                <button aria-label="Notifications" className="ml-2">
                    <svg width="17" height="17" viewBox="0 0 17 17" fill="none" stroke="#fff"><path d="M.5 1.500h16v11h-6l-3 3v-3h-7z" /></svg>
                </button>
                <span className="mr-1 ml-[19px] h-10 w-px bg-[#5b6b80]" />
            </div>
        </div>
    )
}

export default function App() {
    return (
        <div className="flex h-screen min-h-96 flex-col overflow-hidden bg-white font-['Open_Sans',sans-serif]">
            <TitleBar />
            <TabBar />
            <Ribbon />
            <FormulaBar />
            <Sheet />
            <SheetTabs />
            <StatusBar />
            <Taskbar />
        </div>
    )
}
